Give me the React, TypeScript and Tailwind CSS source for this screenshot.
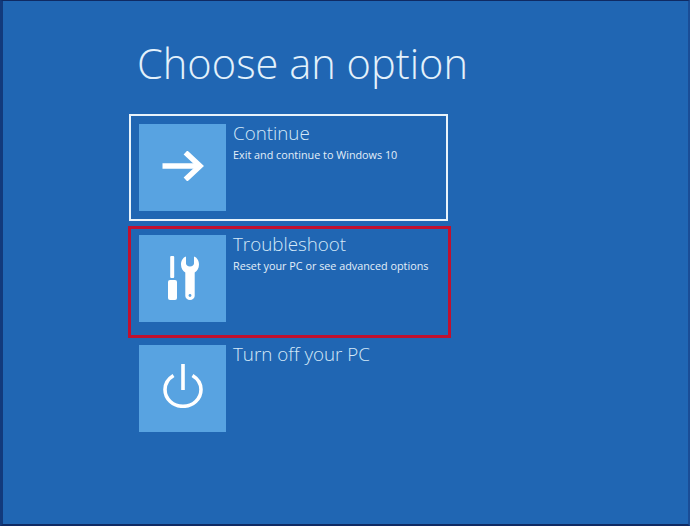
const font = { fontFamily: '"Open Sans", "Noto Sans", sans-serif' };

function ArrowIcon() {
  return (
    <svg width="42" height="30" viewBox="0 0 42 30" fill="none" stroke="#fff" strokeWidth="5.5" className="mt-[-3px]">
      <path d="M0.5 15H37" />
      <path d="M23.5 1.5L38 15L23.5 28.5" />
    </svg>
  );
}

function ToolsIcon() {
  return (
    <svg width="32" height="44" viewBox="0 0 32 44" fill="#fff" className="mt-[-1px] ml-[3px]">
      <rect x="2.2" y="0" width="4" height="22" rx="1" />
      <rect x="0" y="24" width="9" height="20" rx="2" />
      <path d="M18 0.5V7.5C18 9 19.5 10.5 22 10.5C24.5 10.5 26 9 26 7.5V0.5C29 1.5 31 4.5 31 8.5C31 12.5 29 15 26.7 16.5V40C26.7 42.3 24.5 44 22 44C19.5 44 17.3 42.3 17.3 40V16.5C15 15 13 12.5 13 8.5C13 4.5 15 1.5 18 0.5Z" />
      <circle cx="22" cy="39.5" r="1.4" fill="#59a5e3" />
    </svg>
  );
}

function PowerIcon() {
  return (
    <svg width="40" height="44" viewBox="0 0 40 44" fill="none" stroke="#fff" strokeWidth="3.6" className="mt-[-5px]">
      <path d="M20 0V26" />
      <path d="M10.5 11.5C5.5 14.6 2 20 2 25.5C2 35 10 42.3 20 42.3C30 42.3 38 35 38 25.5C38 20 34.5 14.6 29.5 11.5" />
    </svg>
  );
}

function Option({ icon, title, text, frame }: { icon: React.ReactNode; title: string; text?: string; frame?: string }) {
  return (
    <div className="relative flex h-[87px] w-[300px] gap-[7px]">
      {frame && <div className={frame} />}
      <div className="flex h-[87px] w-[87px] shrink-0 items-center justify-center bg-[#58a3e1]">{icon}</div>
      <div className="mt-[-1px]">
        <div className="text-[18.8px] leading-[20px] font-light text-[#d4e9f8]">{title}</div>
        {text && <div className="mt-[5px] text-[10.8px] leading-[14px] whitespace-nowrap text-[#e3eff9]">{text}</div>}
      </div>
    </div>
  );
}

export default function App() {
  return (
    <div style={font} className="h-[526px] w-[690px] overflow-hidden border-t border-r-2 border-b-2 border-l-[3px] border-t-[#0f2a63] border-r-[#1a4d96] border-b-[#0f2a63] border-l-[#123a7c] bg-[#2066b3] pt-[34px] pl-[136px]">
      <h1 className="ml-[-2px] text-[41.6px] leading-[56px] font-light whitespace-nowrap text-[#e3f1fb]">Choose an option</h1>
      <div className="mt-[33px] flex flex-col gap-[23.5px]">
        <Option
          icon={<ArrowIcon />}
          title="Continue"
          text="Exit and continue to Windows 10"
          frame="absolute top-[-10px] left-[-10px] h-[107px] w-[319px] border-2 border-[#e8f3fb]"
        />
        <Option
          icon={<ToolsIcon />}
          title="Troubleshoot"
          text="Reset your PC or see advanced options"
          frame="absolute top-[-9px] left-[-11px] h-[112px] w-[323px] border-[3px] border-[#c0102f]"
        />
        <Option icon={<PowerIcon />} title="Turn off your PC" />
      </div>
    </div>
  );
}
